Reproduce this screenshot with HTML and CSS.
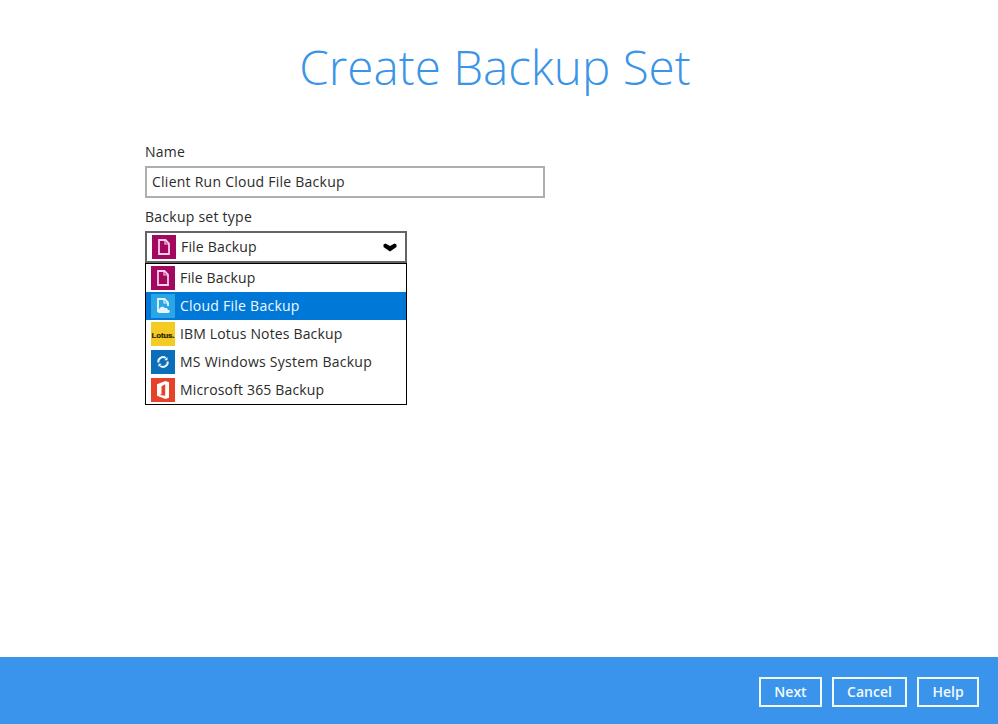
FILE: index.html
```html
<!DOCTYPE html>
<html lang="en">
<head>
<meta charset="utf-8">
<title>Create Backup Set</title>
<link rel="stylesheet" href="styles.css">
</head>
<body>
<div class="page">
  <main class="content">
    <h1 class="title">Create Backup Set</h1>
    <form class="form">
      <div class="label label-name">Name</div>
      <div class="input">Client Run Cloud File Backup</div>
      <div class="label label-type">Backup set type</div>
      <div class="combo">
        <div class="select">
          <svg class="icon" viewBox="0 0 24 24"><rect width="24" height="24" fill="#a3085f"/><path d="M7 5h6.500L17 8.500V19H7z" fill="none" stroke="#f9cdea" stroke-width="1.800"/><path d="M13 5v4h4" fill="none" stroke="#f9cdea" stroke-width="1.200"/></svg>
          <span class="select-text">File Backup</span>
          <svg class="chevron" viewBox="0 0 14 10"><path d="M0.500 2.500 2.500 1.500 7 4 11.500 1.500l2 1v2.500L7 9.500 0.500 5z" fill="#000"/></svg>
        </div>
        <ul class="list">
          <li class="item">
            <svg class="icon" viewBox="0 0 24 24"><rect width="24" height="24" fill="#a3085f"/><path d="M7 5h6.500L17 8.500V19H7z" fill="none" stroke="#f9cdea" stroke-width="1.800"/><path d="M13 5v4h4" fill="none" stroke="#f9cdea" stroke-width="1.200"/></svg>
            <span class="item-text">File Backup</span>
          </li>
          <li class="item item-active">
            <svg class="icon" viewBox="0 0 24 24"><rect width="24" height="24" fill="#2aa5e6"/><path d="M7 18V5h6.500L17 8.500V12" fill="none" stroke="#e6f5fd" stroke-width="1.800"/><path d="M13 5v4h4" fill="none" stroke="#e6f5fd" stroke-width="1.100"/><path d="M8.500 19c-2.500 0-3-3.300-.3-3.700.5-2.800 4.300-3.400 5.500-1 1.200-.7 3 0 3.100 1.500 2.500 0 2.900 3.200 0 3.200z" fill="#e6f5fd"/></svg>
            <span class="item-text">Cloud File Backup</span>
          </li>
          <li class="item">
            <svg class="icon" viewBox="0 0 24 24"><rect width="24" height="24" fill="#f3cb23"/><text x="12" y="15.500" text-anchor="middle" class="lotus">Lotus.</text></svg>
            <span class="item-text">IBM Lotus Notes Backup</span>
          </li>
          <li class="item">
            <svg class="icon" viewBox="0 0 24 24"><rect width="24" height="24" fill="#0a6fb8"/><path d="M7.300 12.500A4.800 4.800 0 0 1 14.800 8M16.700 11.500a4.800 4.800 0 0 1-7.500 4.500" fill="none" stroke="#eaf5fc" stroke-width="2"/><path d="M16.500 7v3.300h-3.300zM7.500 17v-3.300h3.300z" fill="#eaf5fc"/></svg>
            <span class="item-text item-text-wide">MS Windows System Backup</span>
          </li>
          <li class="item">
            <svg class="icon" viewBox="0 0 24 24"><rect width="24" height="24" fill="#e8412a"/><path d="M14.500 3 6 6.300v11.400L14.500 21l3.500-1.200V4.200zM14.200 6.300v11.500l-5.400-.8 1.700-1V8.200z" fill="#fff" fill-rule="evenodd"/></svg>
            <span class="item-text">Microsoft 365 Backup</span>
          </li>
        </ul>
      </div>
    </form>
  </main>
  <footer class="footer">
    <div class="btn btn-next">Next</div>
    <div class="btn btn-cancel">Cancel</div>
    <div class="btn btn-help">Help</div>
  </footer>
</div>
</body>
</html>
```

FILE: styles.css
```css
* { box-sizing: border-box; }
html, body { margin: 0; padding: 0; height: 100%; }
body { background: #fff; font-family: "Open Sans", "Liberation Sans", sans-serif; color: #2b2b2b; font-size: 14px; letter-spacing: 0.25px; overflow: hidden; }
.page { height: 724px; display: flex; flex-direction: column; }
.content { flex: 1; padding: 0 8px 0 0; }
.title { margin: 0; padding-top: 34px; height: 135px; text-align: center; font-weight: 300; font-size: 47.600px; letter-spacing: 0; line-height: 66px; color: #3a94e8; }
.form { padding-left: 145px; }
.label { height: 20px; line-height: 20px; }
.label-name { margin-top: 7px; margin-bottom: 4px; }
.label-type { margin-top: 9px; margin-bottom: 4px; }
.input { width: 400px; height: 32px; border: 2px solid #aeaeae; line-height: 28px; padding-left: 5px; }
.combo { width: 262px; }
.select { height: 32px; border: 2px solid #646464; display: flex; align-items: center; padding-left: 5px; }
.select-text { margin: 0 0 2px 5px; flex: 1; letter-spacing: 0.18px; }
.chevron { width: 14px; height: 10px; margin-right: 8px; }
.icon { width: 24px; height: 24px; flex: none; display: block; }
.list { list-style: none; margin: 0; padding: 0; border: 1px solid #000; height: 142px; }
.item { height: 28px; display: flex; align-items: center; gap: 5px; padding-left: 5px; }
.item-text { margin-bottom: 2px; letter-spacing: 0.16px; }
.item-text-wide { letter-spacing: 0.25px; }
.item-active { background: #0078d7; color: #f2f8fd; }
.item-active .item-text { letter-spacing: 0.25px; }
.lotus { font-family: "Liberation Sans", sans-serif; font-weight: 700; font-size: 8px; letter-spacing: -0.2px; fill: #2a2200; stroke: #2a2200; stroke-width: 0.2px; }
.footer { height: 67px; background: #3a94ec; display: flex; justify-content: flex-end; align-items: flex-start; gap: 10px; padding: 20px 19px 0 0; }
.btn { height: 30px; border: 2px solid #f0fafc; color: #f2fafd; font-weight: 600; letter-spacing: 0; text-align: center; line-height: 26px; }
.btn-next { width: 63px; }
.btn-cancel { width: 75px; }
.btn-help { width: 62px; }
```
